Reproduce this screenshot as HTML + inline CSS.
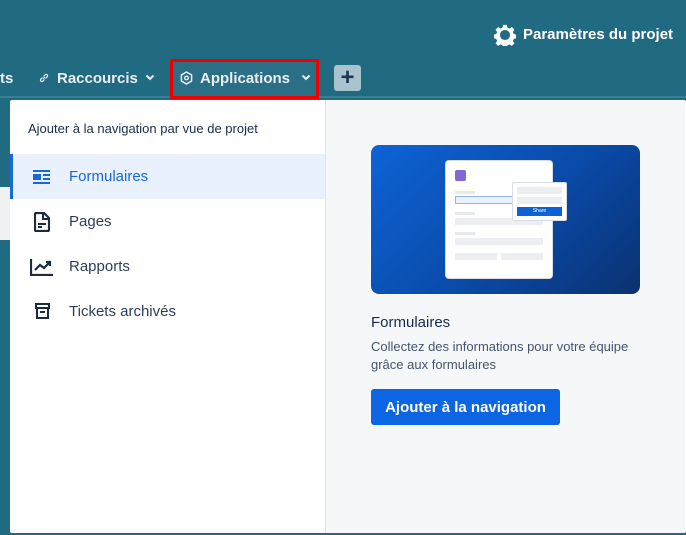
<!DOCTYPE html>
<html><head><meta charset="utf-8"><style>
*{margin:0;padding:0;box-sizing:border-box}
body{width:686px;height:535px;overflow:hidden;background:#206a82;font-family:"Liberation Sans",sans-serif;position:relative}
.t{position:absolute;white-space:nowrap}
.nav{color:#e9eef2;font-weight:bold;font-size:15px}
</style></head><body>
<div style="position:absolute;left:0;top:96px;width:686px;height:2px;background:#3a7e93"></div>
<div style="position:absolute;left:0;top:187px;width:10px;height:53px;background:#f0f1f3"></div>
<svg class="t" style="left:494px;top:24px" width="22" height="22" viewBox="0 0 24 24"><path fill="#fff" d="M10 1h4l.6 3 2.3 1 2.6-1.7 2.8 2.8-1.7 2.6 1 2.3 3 .6v4l-3 .6-1 2.3 1.7 2.6-2.8 2.8-2.6-1.7-2.3 1-.6 3h-4l-.6-3-2.3-1-2.6 1.7-2.8-2.8 1.7-2.6-1-2.3-3-.6v-4l3-.6 1-2.3-1.7-2.6 2.8-2.8 2.6 1.7 2.3-1z"/><circle cx="12" cy="12" r="5.5" fill="#206a82"/></svg>
<div class="t nav" style="left:523px;top:26px;color:#fff">Paramètres du projet</div>
<div class="t nav" style="left:0;top:70px">ts</div>
<svg class="t" style="left:38px;top:72px" width="12" height="12" viewBox="0 0 12 12"><path d="M5 7l2-2M4.5 5.5L2.5 7.5a1.6 1.6 0 0 0 2 2l2-2M7.5 6.5l2-2a1.6 1.6 0 0 0-2-2l-2 2" fill="none" stroke="#e9eef2" stroke-width="1.2"/></svg>
<div class="t nav" style="left:57px;top:70px">Raccourcis</div>
<svg class="t" style="left:145px;top:74px" width="10" height="7" viewBox="0 0 10 7"><path d="M1.5 1.5L5 5l3.5-3.5" fill="none" stroke="#e9eef2" stroke-width="2"/></svg>
<div style="position:absolute;left:170px;top:59px;width:149px;height:40px;border:3px solid #e00;background:#2a6f86"></div>
<svg class="t" style="left:180px;top:71px" width="13" height="14" viewBox="0 0 14 15"><path d="M7 1l5.5 3.2v6.6L7 14 1.5 10.8V4.2z" fill="none" stroke="#e9eef2" stroke-width="1.6"/><circle cx="7" cy="7.5" r="2" fill="none" stroke="#e9eef2" stroke-width="1.5"/></svg>
<div class="t nav" style="left:200px;top:70px">Applications</div>
<svg class="t" style="left:301px;top:74px" width="10" height="7" viewBox="0 0 10 7"><path d="M1.5 1.5L5 5l3.5-3.5" fill="none" stroke="#e9eef2" stroke-width="2"/></svg>
<div style="position:absolute;left:334px;top:65px;width:27px;height:26px;background:#a9c3cf;border-radius:3px;color:#1c3550;font-size:24px;line-height:25px;text-align:center;font-weight:bold">+</div>

<div style="position:absolute;left:10px;top:100px;width:676px;height:433px;background:#fff;border-radius:2px">
  <div style="position:absolute;left:315px;top:0;width:360px;height:433px;background:#f6f7f9;border-left:1px solid #e3e5e8"></div>
  <div class="t" style="left:18px;top:21px;font-size:13px;color:#172b4d">Ajouter à la navigation par vue de projet</div>
  <div style="position:absolute;left:0;top:54px;width:315px;height:45px;background:#e8f1fd;border-left:3px solid #1868db"></div>
  <svg class="t" style="left:23px;top:70px" width="17" height="14" viewBox="0 0 17 14"><rect x="0" y="0" width="17" height="2" fill="#1868db"/><rect x="0" y="4" width="8" height="6" fill="#1868db"/><rect x="10" y="4" width="7" height="2" fill="#1868db"/><rect x="10" y="8" width="7" height="2" fill="#1868db"/><rect x="0" y="12" width="17" height="2" fill="#1868db"/></svg>
  <div class="t" style="left:59px;top:68px;font-size:15px;color:#1868db">Formulaires</div>
  <svg class="t" style="left:24px;top:112px" width="16" height="20" viewBox="0 0 16 20"><path d="M2 1h8l5 5v12a1 1 0 0 1-1 1H2a1 1 0 0 1-1-1V2a1 1 0 0 1 1-1z" fill="none" stroke="#1c2b42" stroke-width="2.2"/><path d="M9 1v6h6" fill="none" stroke="#1c2b42" stroke-width="2"/><rect x="4" y="11" width="8" height="2" fill="#1c2b42"/><rect x="4" y="14" width="4" height="2" fill="#1c2b42"/></svg>
  <div class="t" style="left:59px;top:113px;font-size:15px;color:#2c3e5d">Pages</div>
  <svg class="t" style="left:20px;top:158px" width="24" height="18" viewBox="0 0 24 18"><path d="M1 1v16h22" fill="none" stroke="#1c2b42" stroke-width="2.2"/><path d="M5 12l5-5 4 3 5-5M16 4h4v4" fill="none" stroke="#1c2b42" stroke-width="2.2"/></svg>
  <div class="t" style="left:59px;top:158px;font-size:15px;color:#2c3e5d">Rapports</div>
  <svg class="t" style="left:25px;top:203px" width="15" height="16" viewBox="0 0 15 16"><rect x="1" y="1" width="13" height="4" fill="none" stroke="#1c2b42" stroke-width="2"/><path d="M2 5v10h11V5" fill="none" stroke="#1c2b42" stroke-width="2"/><rect x="5" y="8" width="5" height="2" fill="#1c2b42"/></svg>
  <div class="t" style="left:59px;top:203px;font-size:15px;color:#2c3e5d">Tickets archivés</div>

  <div style="position:absolute;left:361px;top:45px;width:269px;height:149px;border-radius:8px;background:linear-gradient(135deg,#0d63d6 0%,#0a4aa8 55%,#0a3170 100%);overflow:hidden">
    <div style="position:absolute;left:74px;top:15px;width:108px;height:119px;background:#fff;border-radius:4px;border:1px solid #d8dde5">
      <div style="position:absolute;left:9px;top:9px;width:11px;height:11px;background:#8166d9;border-radius:2px"></div>
      <div style="position:absolute;left:9px;top:30px;width:20px;height:3px;background:#e8e9ec"></div>
      <div style="position:absolute;left:9px;top:35px;width:88px;height:8px;border:1px solid #8fb6f5;background:#e8f1fd"></div>
      <div style="position:absolute;left:9px;top:51px;width:20px;height:3px;background:#e8e9ec"></div>
      <div style="position:absolute;left:9px;top:57px;width:88px;height:7px;background:#eceef1"></div>
      <div style="position:absolute;left:9px;top:71px;width:20px;height:3px;background:#e8e9ec"></div>
      <div style="position:absolute;left:9px;top:77px;width:88px;height:7px;background:#eceef1"></div>
      <div style="position:absolute;left:9px;top:92px;width:42px;height:7px;background:#eceef1"></div>
      <div style="position:absolute;left:55px;top:92px;width:42px;height:7px;background:#eceef1"></div>
    </div>
    <div style="position:absolute;left:141px;top:37px;width:55px;height:39px;background:#fff;border-radius:2px;border:1px solid #d8dde5">
      <div style="position:absolute;left:4px;top:4px;width:45px;height:7px;background:#eceef1"></div>
      <div style="position:absolute;left:4px;top:14px;width:45px;height:7px;background:#eceef1"></div>
      <div style="position:absolute;left:4px;top:24px;width:45px;height:9px;background:#0d63d6;color:#fff;font-size:5px;text-align:center;line-height:9px">Share</div>
    </div>
  </div>
  <div class="t" style="left:361px;top:214px;font-size:15px;color:#172b4d">Formulaires</div>
  <div class="t" style="left:361px;top:238px;font-size:13px;color:#44546f;line-height:18px">Collectez des informations pour votre équipe<br>grâce aux formulaires</div>
  <div style="position:absolute;left:361px;top:289px;width:189px;height:36px;background:#0c66e4;border-radius:3px;color:#fff;font-weight:bold;font-size:15px;line-height:38px;text-align:center">Ajouter à la navigation</div>
</div>
</body></html>
